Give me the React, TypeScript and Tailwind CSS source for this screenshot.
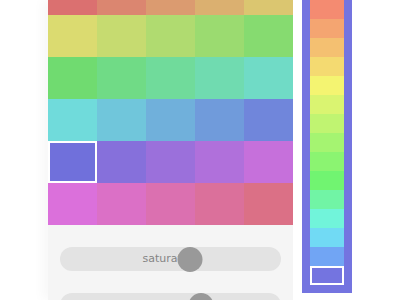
import React, { useState } from "react";

// hue steps for the big grid: 30 cells, 12deg apart
const gridHues = Array.from({ length: 30 }, (_, i) => i * 12);

// hues for the side strip (recent colours)
const stripHues = [12, 24, 36, 48, 60, 72, 84, 96, 108, 120, 144, 168, 192, 216];

const Slider: React.FC<{ label?: string; value: number }> = ({ label, value }) => {
  return (
    <div className="relative h-6 rounded-full bg-[#e3e3e3] flex items-center justify-center">
      {label && (
        <span className="text-[11px] text-[#858585] font-['DejaVu_Sans',sans-serif]">
          {label}
        </span>
      )}
      <div
        className="absolute top-0 h-[25px] w-[25px] -translate-x-1/2 rounded-full bg-[#999999]"
        style={{ left: `${value}%` }}
      />
    </div>
  );
};

export default function App() {
  const [selected, setSelected] = useState(20);

  return (
    <div className="flex h-[300px] w-[400px] overflow-hidden bg-white pl-12">
      {/* Panel chính */}
      <div className="flex w-[245px] shrink-0 flex-col overflow-hidden shadow-[-6px_0_10px_rgba(0,0,0,0.03)]">
        <div className="h-[225px] shrink-0 overflow-hidden">
          <div className="-mt-[27px] grid grid-cols-5 auto-rows-[42px]">
            {gridHues.map((h, i) => (
              <button
                key={h}
                onClick={() => setSelected(i)}
                className={i === selected ? "border-2 border-white" : ""}
                style={{ backgroundColor: `hsl(${h}, 60%, 65%)` }}
              />
            ))}
          </div>
        </div>
        <div className="flex flex-1 flex-col gap-[22px] bg-[#f5f5f5] px-3 pt-[22px]">
          <Slider label="saturation" value={59} />
          <Slider value={64} />
        </div>
      </div>

      {/* Dải màu bên phải */}
      <div className="ml-[9px] flex h-[293px] w-[50px] shrink-0 flex-col bg-[#7474e0] px-2 pb-2">
        {stripHues.map((h) => (
          <div
            key={h}
            className="h-[19px] shrink-0"
            style={{ backgroundColor: `hsl(${h}, 85%, 70%)` }}
          />
        ))}
        <div className="h-[19px] shrink-0 border-2 border-white bg-[#7474e0]" />
      </div>
    </div>
  );
}
